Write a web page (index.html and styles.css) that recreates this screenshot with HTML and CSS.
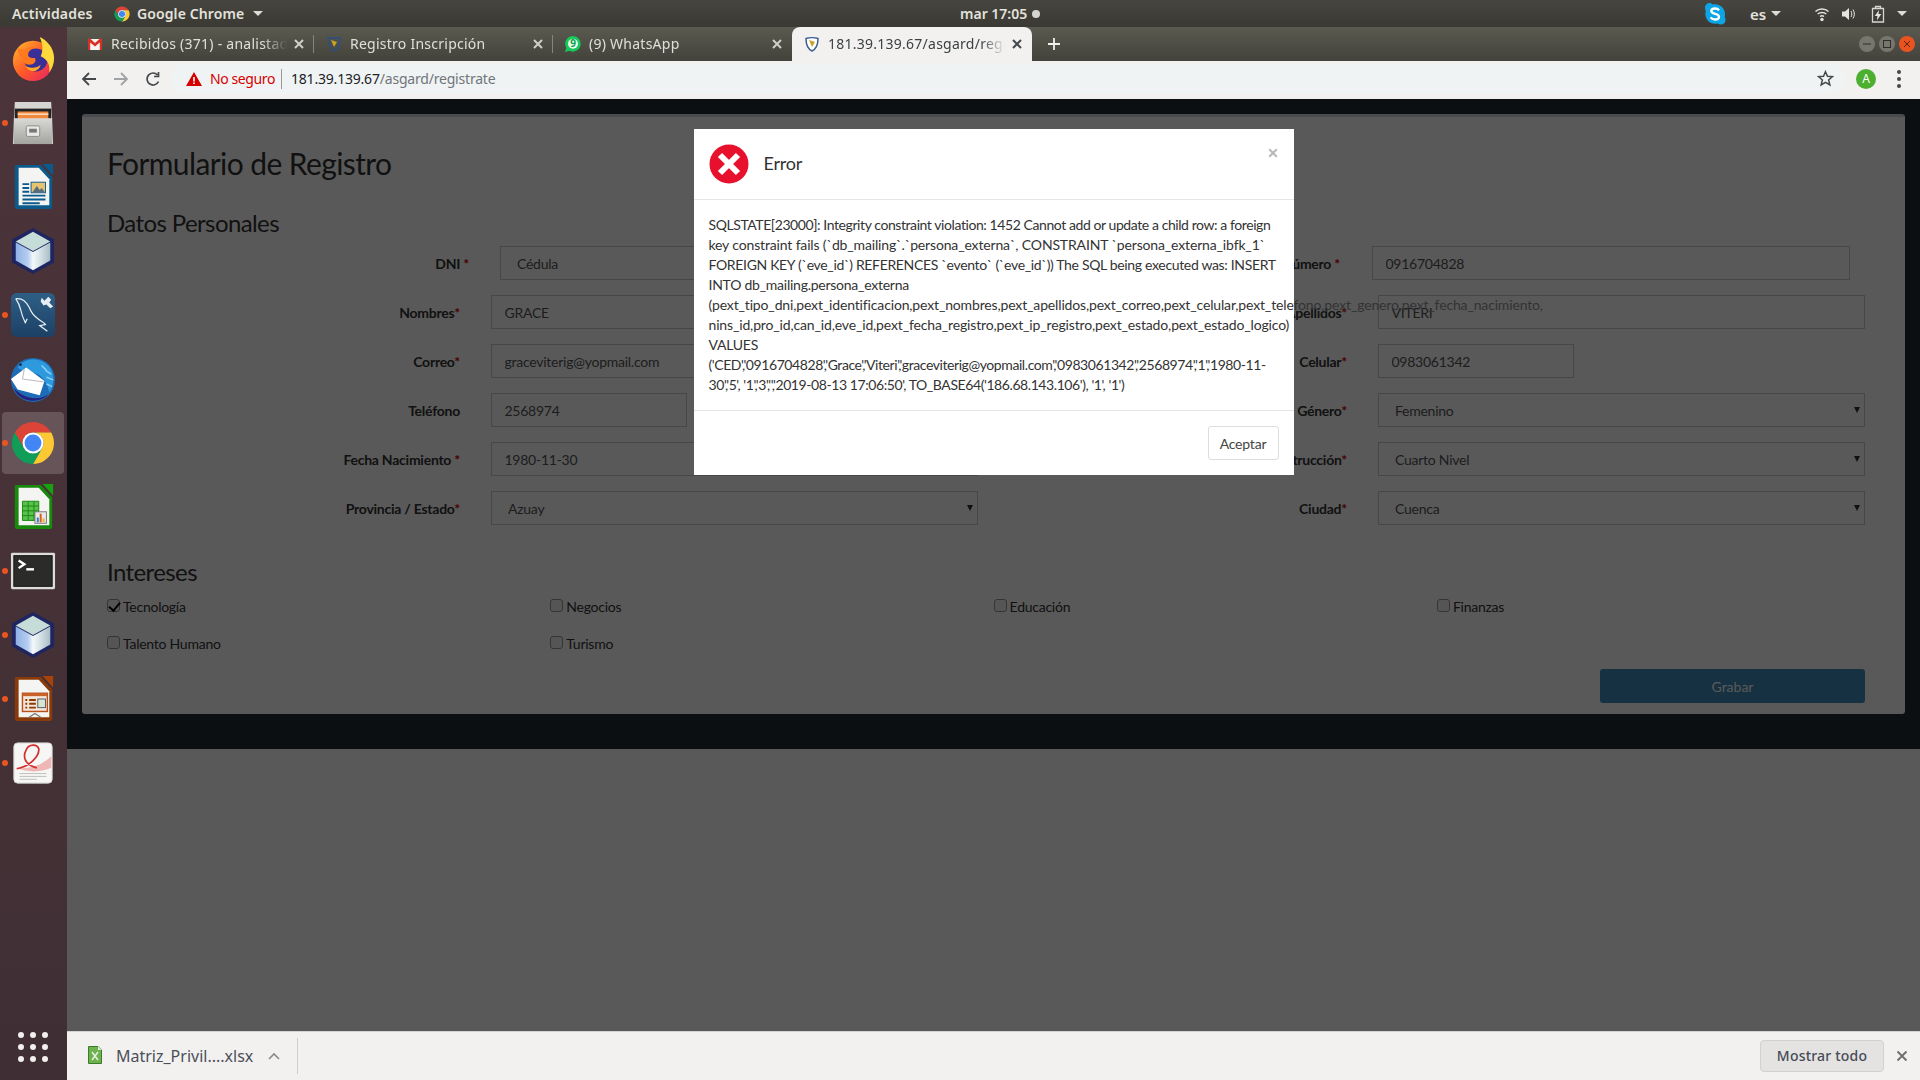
FILE: index.html
```html
<!DOCTYPE html>
<html lang="es">
<head>
<meta charset="utf-8">
<title>Registro</title>
<link rel="stylesheet" href="styles.css">
</head>
<body>
<svg class="defs" width="0" height="0">
  <defs>
    <symbol id="chrome" viewBox="1 1 46 46">
      <path fill="#db4437" d="M5 13A22 22 0 0 1 43 13H24A11 11 0 0 0 14.500 29.500Z"/>
      <path fill="#fcc934" d="M43 13A22 22 0 0 1 24 46L33.500 29.500A11 11 0 0 0 24 13Z"/>
      <path fill="#0f9d58" d="M24 46A22 22 0 0 1 5 13L14.500 29.500A11 11 0 0 0 33.500 29.500Z"/>
      <circle cx="24" cy="24" r="11" fill="#fff"/>
      <circle cx="24" cy="24" r="8.800" fill="#4285f4"/>
    </symbol>
    <linearGradient id="cubeL" x1="0" y1="0" x2="1" y2="0">
      <stop offset="0" stop-color="#8fb0e6"/><stop offset=".7" stop-color="#b5cdf0"/><stop offset="1" stop-color="#f4f8fb"/>
    </linearGradient>
    <linearGradient id="cubeR" x1="0" y1="0" x2="1" y2="0">
      <stop offset="0" stop-color="#f4f8fb"/><stop offset=".5" stop-color="#cfdde2"/><stop offset="1" stop-color="#a9bcc6"/>
    </linearGradient>
    <symbol id="cube" viewBox="1 0 46 48">
      <path fill="#1f2560" d="M24 0 46 12V36L24 48 2 36V12Z"/>
      <path fill="#c5dcd8" d="M24 4 42 14 24 24 6 14Z"/>
      <path fill="url(#cubeL)" d="M6 15 24 25V44L6 34Z"/>
      <path fill="url(#cubeR)" d="M42 15V34L24 44V25Z"/>
    </symbol>
    <symbol id="x" viewBox="0 0 12 12">
      <path d="M2 2 10 10M10 2 2 10" fill="none" stroke="currentColor" stroke-width="2"/>
    </symbol>
    <linearGradient id="ff" x1="0" y1="0" x2="1" y2="1">
      <stop offset="0" stop-color="#ffbd2e"/><stop offset=".5" stop-color="#ff5a26"/><stop offset="1" stop-color="#e5206a"/>
    </linearGradient>
    <linearGradient id="steel" x1="0" y1="0" x2="0" y2="1">
      <stop offset="0" stop-color="#d9d9d6"/><stop offset="1" stop-color="#a3a3a0"/>
    </linearGradient>
    <linearGradient id="wb" x1="0" y1="0" x2="0" y2="1">
      <stop offset="0" stop-color="#2f5f86"/><stop offset="1" stop-color="#1c4066"/>
    </linearGradient>
  </defs>
</svg>

<header class="topbar">
  <span class="top-activities">Actividades</span>
  <svg class="top-chrome" width="16" height="16"><use href="#chrome"/></svg>
  <span class="top-app">Google Chrome</span>
  <i class="caret top-caret"></i>
  <span class="top-clock">mar 17:05</span>
  <i class="top-dot"></i>
  <svg class="top-skype" width="22" height="24" viewBox="0 0 22 24">
    <path fill="#0ea5e6" d="M6 1C3 1 1 3 1 6c0 1 .3 2 .8 2.800C1.500 9.800 1.400 10.900 1.400 12c0 5.500 4.300 9.800 9.600 9.800.9 0 1.800-.1 2.600-.4 1 .7 2.100 1.100 3.400 1.100 2.800 0 4.500-2.200 4.500-4.800 0-1-.3-2-.8-2.800.2-.9.3-1.900.3-2.900C20.800 6.500 16.500 2.200 11 2.200c-.9 0-1.800.1-2.600.3C7.800 1.500 7 1 6 1Z"/>
    <path fill="none" stroke="#fff" stroke-width="2.300" d="M15 8.300C14.200 7 12.800 6.500 11 6.500 8.800 6.500 7.300 7.500 7.300 9.100c0 3.600 7.700 1.800 7.700 5.600 0 1.700-1.700 2.800-4 2.800-2 0-3.500-.8-4.300-2.200"/>
  </svg>
  <span class="top-lang">es</span>
  <i class="caret top-caret2"></i>
  <svg class="top-wifi" width="16" height="16" viewBox="0 0 16 16">
    <path fill="none" stroke="#e6e4df" stroke-width="1.500" d="M1.500 5.500C5 2.300 11 2.300 14.500 5.500M3.700 8C6 6 10 6 12.300 8M6 10.500c1-.8 3-.8 4 0"/>
    <circle cx="8" cy="13.500" r="1.700" fill="#e6e4df"/>
  </svg>
  <svg class="top-vol" width="16" height="16" viewBox="0 0 16 16">
    <path fill="#e6e4df" d="M1 5.500H4L8 2V14L4 10.500H1Z"/>
    <path fill="none" stroke="#e6e4df" d="M10 5c1 2 1 4 0 6M12 3.500c1.800 3 1.800 6 0 9"/>
  </svg>
  <svg class="top-bat" width="14" height="18" viewBox="0 0 14 18">
    <path fill="none" stroke="#d8d6d0" stroke-width="1.300" d="M1.500 3.500H12.500V17H1.500ZM4.500 3.500V1.500H9.500V3.500"/>
    <path fill="#e6e4df" d="M8 5 3.800 11H6.500L5.800 15.500 10.300 9H7.500Z"/>
  </svg>
  <i class="caret top-caret3"></i>
</header>

<div class="desktop">
  <nav class="dock">
    <div class="dock-item">
      <svg class="dock-icon" viewBox="0 0 48 48">
        <circle cx="24" cy="26" r="21" fill="url(#ff)"/>
        <circle cx="27" cy="25" r="12" fill="#3a2f96"/>
        <path fill="#ffd83b" d="M31 1c7 3 15 11 15 22 0 6-2 11-5 15 1-8-2-14-9-17 3-6 2-13-1-20Z"/>
        <path fill="#ff7a1f" d="M8 13c3 0 6 2 8 1 3-2 6-3 9-2-3 2-6 4-6 7-1 3 3 4 7 4 2 4-1 7-6 7-4 0-7-3-8-7-2-3-4-6-4-10Z"/>
        <path fill="#ffab25" d="M16 31c5 3 12 3 16-1-1 5-6 8-11 6-2-1-4-3-5-5Z"/>
      </svg>
    </div>
    <div class="dock-item running">
      <svg class="dock-icon" viewBox="0 0 48 48">
        <path fill="#d5d5d2" d="M5 2H43L45 46H3Z"/>
        <rect x="5" y="9" width="38" height="13" fill="#222"/>
        <rect x="8" y="12" width="32" height="8" fill="#f0883e"/>
        <rect x="8" y="14" width="32" height="1.500" fill="#f6e6d0"/>
        <rect x="4" y="19" width="40" height="27" fill="url(#steel)"/>
        <rect x="17" y="27" width="14" height="11" rx="1.500" fill="#e8e8e6" stroke="#8a8a88"/>
        <rect x="20" y="30" width="8" height="4" fill="#777"/>
      </svg>
    </div>
    <div class="dock-item">
      <svg class="dock-icon" viewBox="0 0 48 48">
        <path fill="#0b5a8c" d="M6 1H32L44 14V44A3 3 0 0 1 41 47H8A3 3 0 0 1 5 44V2Z"/>
        <path fill="#f4f4f2" d="M9 4H30L41 16V43H9Z"/>
        <path fill="#0b5a8c" d="M34 0H45V12Z"/>
        <path fill="#0b5a8c" d="M13 20H20V22H13ZM13 24H20V26H13ZM13 28H20V30H13ZM13 32H37V34H13ZM13 36H37V38H13ZM13 40H31V42H13Z"/>
        <rect x="22" y="19" width="15" height="11" fill="#e7c36f" stroke="#0b5a8c"/>
        <path fill="#566d7d" d="M23 30 28 23 31 27 33 25 37 30Z"/>
      </svg>
    </div>
    <div class="dock-item">
      <svg class="dock-icon" viewBox="0 0 48 48"><use href="#cube"/></svg>
    </div>
    <div class="dock-item running">
      <svg class="dock-icon" viewBox="0 0 48 48">
        <rect x="1" y="1" width="46" height="46" rx="6" fill="url(#wb)"/>
        <path fill="none" stroke="#e6edf2" stroke-width="1.300" d="M6 7c6-1 11 3 14 9 2 5 5 9 8 11 3 3 7 4 9 7l-6 1 8 6M6 7c2 3 4 7 5 11 1 5 3 10 5 14l2-4"/>
        <path fill="#e6edf2" d="M33 6 36 9 40 5 43 8 41 11 45 15 42 17 38 13 35 14 32 10Z"/>
      </svg>
    </div>
    <div class="dock-item">
      <svg class="dock-icon" viewBox="0 0 48 48">
        <circle cx="24" cy="25" r="23" fill="#1d6cb5"/>
        <path fill="#2d9ade" d="M8 12C14 2 30 0 40 10c7 8 7 20 1 28-2-10-7-18-15-20-6-2-13-1-18-6Z"/>
        <path fill="none" stroke="#8fd0f5" stroke-width="1.500" d="M33 10 38 15M37 15 43 19M38 22 45 25M38 29 44 32"/>
        <path fill="#27207d" d="M4 33c6 7 14 11 23 11 5 0 9-1 13-4-6 8-22 9-30 2-2-2-5-5-6-9Z"/>
        <path fill="#fff" d="M1 24 17 12 36 26 31 41 8 35Z"/>
        <path fill="none" stroke="#b7b7c2" d="M15 13 13 24 35 27"/>
        <circle cx="11" cy="9" r="1.300" fill="#111a44"/>
      </svg>
    </div>
    <div class="dock-item running active">
      <svg class="dock-icon" viewBox="0 0 46 46"><use href="#chrome"/></svg>
    </div>
    <div class="dock-item">
      <svg class="dock-icon" viewBox="0 0 48 48">
        <path fill="#178a0e" d="M6 1H32L44 14V44A3 3 0 0 1 41 47H8A3 3 0 0 1 5 44V2Z"/>
        <path fill="#f4f4f2" d="M9 4H30L41 16V43H9Z"/>
        <path fill="#18a00f" d="M34 0H45V12Z"/>
        <path fill="#5cc04e" stroke="#178a0e" d="M13 18H30V38H13Z"/>
        <path fill="none" stroke="#178a0e" d="M13 23H30M13 28H30M13 33H30M19 18V38M25 18V38"/>
        <rect x="26" y="29" width="12" height="12" fill="#e8e8e8" stroke="#777"/>
        <path fill="#2d7fd0" d="M28 35H30V40H28Z"/><path fill="#dd5a1c" d="M31 31H33V40H31Z"/><path fill="#ecb21f" d="M34 36H36V40H34Z"/>
      </svg>
    </div>
    <div class="dock-item running">
      <svg class="dock-icon" viewBox="0 0 48 48">
        <rect x="1" y="5" width="46" height="38" rx="1.500" fill="#dcdcd9"/>
        <rect x="4" y="8" width="40" height="32" fill="#2b2b2a" stroke="#111"/>
        <path fill="none" stroke="#fff" stroke-width="2.500" d="M9 13 15 17 9 21"/>
        <rect x="17" y="21" width="8" height="2.500" fill="#fff"/>
      </svg>
    </div>
    <div class="dock-item running">
      <svg class="dock-icon" viewBox="0 0 48 48"><use href="#cube"/></svg>
    </div>
    <div class="dock-item running">
      <svg class="dock-icon" viewBox="0 0 48 48">
        <path fill="#8a3a08" d="M6 1H32L44 14V44A3 3 0 0 1 41 47H8A3 3 0 0 1 5 44V2Z"/>
        <path fill="#f4f4f2" d="M9 4H30L41 16V43H9Z"/>
        <path fill="#a8420b" d="M34 0H45V12Z"/>
        <rect x="13" y="18" width="26" height="19" fill="#f3e6d8" stroke="#b8501c" stroke-width="1.500"/>
        <rect x="13" y="18" width="26" height="3" fill="#c8612a"/>
        <path fill="#8a3a08" d="M16 24H18V26H16ZM20 24H27V26H20ZM16 28H18V30H16ZM20 28H27V30H20ZM16 32H18V34H16ZM20 32H27V34H20Z"/>
        <rect x="29" y="24" width="8" height="9" fill="#d7e6cf" stroke="#557"/>
        <path fill="none" stroke="#777" stroke-width="1.300" d="M20 43 26 39 32 43"/>
      </svg>
    </div>
    <div class="dock-item running">
      <svg class="dock-icon" viewBox="0 0 48 48">
        <rect x="4" y="3" width="40" height="42" rx="4" fill="#f6f6f4" stroke="#cfcfcd"/>
        <path fill="#efb6b6" d="M6 29C20 31 34 26 43 17V29C32 34 18 34 6 29Z"/>
        <path fill="none" stroke="#d32f2f" stroke-width="1.800" d="M7 30C20 28 31 17 30 9 28 4 20 4 17 10 13 17 15 26 28 29"/>
        <path fill="none" stroke="#bdbdbb" d="M10 35H38M10 38H38M10 41H28"/>
      </svg>
    </div>
    <div class="dock-spacer"></div>
    <div class="apps-grid">
      <i></i><i></i><i></i><i></i><i></i><i></i><i></i><i></i><i></i>
    </div>
  </nav>

  <div class="window">
    <div class="tabstrip">
      <div class="tab sep">
        <svg class="favicon" viewBox="0 0 16 16"><rect x="1" y="3" width="14" height="11" fill="#f4f4f2"/><path fill="#d93025" d="M1 2.500H3L8 7 13 2.500H15V14H12.800V6.500L8 10.500 3.200 6.500V14H1Z"/></svg>
        <span class="tab-title">Recibidos (371) - analistad</span>
        <svg class="tab-x"><use href="#x"/></svg>
      </div>
      <div class="tab sep">
        <svg class="favicon" viewBox="0 0 16 16"><path fill="none" stroke="#2b4f86" stroke-width="1.500" d="M2 2H14C14 9 12 13 8 15 5 13 3 9 2 2Z"/><path fill="#c9a227" d="M5 4 11 6 8 11Z"/></svg>
        <span class="tab-title">Registro Inscripción</span>
        <svg class="tab-x"><use href="#x"/></svg>
      </div>
      <div class="tab">
        <svg class="favicon" viewBox="0 0 16 16"><path fill="#14c95a" d="M8 0A7.800 7.800 0 0 0 1.300 11.800L0 16 4.400 14.800A7.800 7.800 0 1 0 8 0Z"/><circle cx="8" cy="7.800" r="5" fill="#eafaf0"/><text class="wa-num" x="8" y="11.300" text-anchor="middle">9</text></svg>
        <span class="tab-title">(9) WhatsApp</span>
        <svg class="tab-x"><use href="#x"/></svg>
      </div>
      <div class="tab active">
        <svg class="favicon" viewBox="0 0 16 16"><path fill="#fff" stroke="#3a5e92" stroke-width="1.500" d="M2 2.500C5 1.500 11 1.500 14 2.500 14 9 12 13 8 15 4 13 2 9 2 2.500Z"/><path fill="#c9a227" d="M5 4 11 6 8 11Z"/></svg>
        <span class="tab-title">181.39.139.67/asgard/registrate</span>
        <svg class="tab-x"><use href="#x"/></svg>
      </div>
      <svg class="new-tab" width="14" height="14" viewBox="0 0 14 14"><path d="M7 1V13M1 7H13" stroke="#f0efec" stroke-width="1.800"/></svg>
      <div class="win-controls">
        <span class="win-btn"><svg width="16" height="16" viewBox="0 0 16 16"><path d="M4 8H12" stroke="#2f2e2a" stroke-width="1"/></svg></span>
        <span class="win-btn"><svg width="16" height="16" viewBox="0 0 16 16"><rect x="4.500" y="4.500" width="7" height="7" fill="none" stroke="#2f2e2a"/></svg></span>
        <span class="win-btn close"><svg width="16" height="16" viewBox="0 0 16 16"><path d="M5 5 11 11M11 5 5 11" stroke="#5c2410" stroke-width="1"/></svg></span>
      </div>
    </div>

    <div class="toolbar">
      <svg class="tb-icon" width="16" height="16" viewBox="0 0 16 16"><path d="M15 8H2M8 2 2 8 8 14" fill="none" stroke="#45484b" stroke-width="1.800"/></svg>
      <svg class="tb-icon" width="16" height="16" viewBox="0 0 16 16"><path d="M1 8H14M8 2 14 8 8 14" fill="none" stroke="#a0a2a4" stroke-width="1.800"/></svg>
      <svg class="tb-icon" width="16" height="16" viewBox="0 0 16 16"><path d="M13.500 10.500A6 6 0 1 1 12.500 4M13.500 1V5.500H9" fill="none" stroke="#45484b" stroke-width="1.700"/></svg>
      <div class="omnibox">
        <svg class="warn" width="16" height="14" viewBox="0 0 16 14"><path fill="#d50000" d="M8 0 16 14H0Z"/><path fill="#fff" d="M7.200 5H8.800V9.500H7.200ZM7.200 10.500H8.800V12H7.200Z"/></svg>
        <span class="insecure">No seguro</span>
        <span class="omni-sep"></span>
        <span class="url"><b>181.39.139.67</b>/asgard/registrate</span>
        <svg class="star" width="17" height="17" viewBox="0 0 18 18"><path fill="none" stroke="#45484b" stroke-width="1.600" d="M9 1.800 11.100 6.700 16.300 7.100 12.300 10.500 13.600 15.700 9 13 4.400 15.700 5.700 10.500 1.700 7.100 6.900 6.700Z"/></svg>
      </div>
      <span class="avatar">A</span>
      <span class="kebab"><i></i><i></i><i></i></span>
    </div>

    <div class="viewport">
      <div class="page">
        <section class="card">
          <h1 class="form-title">Formulario de Registro</h1>
          <h2 class="section-title">Datos Personales</h2>
          <div class="form-rows">
            <div class="form-row">
              <div class="field dni">
                <label class="field-label">DNI <em>*</em></label>
                <div class="select-wrap grow"><select class="control sel"><option>Cédula</option></select></div>
              </div>
              <div class="field numero">
                <label class="field-label">Número <em>*</em></label>
                <input class="control grow" value="0916704828">
              </div>
            </div>
            <div class="form-row">
              <div class="field">
                <label class="field-label">Nombres<em>*</em></label>
                <input class="control grow" value="GRACE">
              </div>
              <div class="field right">
                <label class="field-label">Apellidos<em>*</em></label>
                <input class="control grow" value="VITERI">
              </div>
            </div>
            <div class="form-row">
              <div class="field">
                <label class="field-label">Correo<em>*</em></label>
                <input class="control grow" value="graceviterig@yopmail.com">
              </div>
              <div class="field right">
                <label class="field-label">Celular<em>*</em></label>
                <input class="control short" value="0983061342">
              </div>
            </div>
            <div class="form-row">
              <div class="field">
                <label class="field-label">Teléfono</label>
                <input class="control short" value="2568974">
              </div>
              <div class="field right">
                <label class="field-label">Género<em>*</em></label>
                <div class="select-wrap grow"><select class="control sel"><option>Femenino</option></select></div>
              </div>
            </div>
            <div class="form-row">
              <div class="field">
                <label class="field-label">Fecha Nacimiento <em>*</em></label>
                <input class="control grow" value="1980-11-30">
              </div>
              <div class="field right">
                <label class="field-label">Instrucción<em>*</em></label>
                <div class="select-wrap grow"><select class="control sel"><option>Cuarto Nivel</option></select></div>
              </div>
            </div>
            <div class="form-row">
              <div class="field">
                <label class="field-label">Provincia / Estado<em>*</em></label>
                <div class="select-wrap grow"><select class="control sel"><option>Azuay</option></select></div>
              </div>
              <div class="field right">
                <label class="field-label">Ciudad<em>*</em></label>
                <div class="select-wrap grow"><select class="control sel"><option>Cuenca</option></select></div>
              </div>
            </div>
          </div>
          <h2 class="section-title interests">Intereses</h2>
          <div class="checks">
            <label class="check"><input type="checkbox" checked><span>Tecnología</span></label>
            <label class="check"><input type="checkbox"><span>Negocios</span></label>
            <label class="check"><input type="checkbox"><span>Educación</span></label>
            <label class="check"><input type="checkbox"><span>Finanzas</span></label>
            <label class="check"><input type="checkbox"><span>Talento Humano</span></label>
            <label class="check"><input type="checkbox"><span>Turismo</span></label>
          </div>
          <div class="actions"><button class="btn-primary">Grabar</button></div>
        </section>
      </div>

      <div class="backdrop"></div>

      <div class="modal-layer">
        <div class="modal">
          <div class="modal-header">
            <svg class="err-icon" width="40" height="40" viewBox="0 0 40 40">
              <circle cx="20" cy="20" r="19.500" fill="#e8112d"/>
              <path d="M11 11 29 29M29 11 11 29" stroke="#fff" stroke-width="6"/>
            </svg>
            <span class="modal-title">Error</span>
            <svg class="modal-close" width="10" height="10" viewBox="0 0 12 12"><path d="M1.500 1.500 10.500 10.500M10.500 1.500 1.500 10.500" stroke="#b8b8b8" stroke-width="2.400"/></svg>
          </div>
          <div class="modal-body">
            <span class="sql-line tight">SQLSTATE[23000]: Integrity constraint violation: 1452 Cannot add or update a child row: a foreign</span>
            <span class="sql-line wide">key constraint fails (`db_mailing`.`persona_externa`, CONSTRAINT `persona_externa_ibfk_1`</span>
            <span class="sql-line mid">FOREIGN KEY (`eve_id`) REFERENCES `evento` (`eve_id`)) The SQL being executed was: INSERT</span>
            <span class="sql-line">INTO db_mailing.persona_externa</span>
            <span class="sql-line wide">(pext_tipo_dni,pext_identificacion,pext_nombres,pext_apellidos,pext_correo,pext_celular,pext_telefono,pext_genero,pext_fecha_nacimiento,</span>
            <span class="sql-line wide">nins_id,pro_id,can_id,eve_id,pext_fecha_registro,pext_ip_registro,pext_estado,pext_estado_logico)</span>
            <span class="sql-line">VALUES</span>
            <span class="sql-line tight">('CED','0916704828','Grace','Viteri','graceviterig@yopmail.com','0983061342','2568974','1','1980-11-</span>
            <span class="sql-line tight">30','5', '1','3','','2019-08-13 17:06:50', TO_BASE64('186.68.143.106'), '1', '1')</span>
          </div>
          <div class="modal-footer"><button class="btn-default">Aceptar</button></div>
        </div>
      </div>
    </div>

    <div class="downloads">
      <svg class="xlsx" width="14" height="18" viewBox="0 0 14 18">
        <path fill="#6db24f" stroke="#3c7a2c" d="M.5 .5H10L13.500 4V17.500H.5Z"/>
        <path fill="#e8f2e0" d="M10 .5V4H13.500Z"/>
        <path d="M4 6 10 14M10 6 4 14" stroke="#e8f2e0" stroke-width="1.500"/>
      </svg>
      <span class="dl-name">Matriz_Privil....xlsx</span>
      <svg class="dl-chev" width="12" height="8" viewBox="0 0 12 8"><path d="M1 7 6 2 11 7" fill="none" stroke="#8a8a88" stroke-width="1.600"/></svg>
      <span class="dl-sep"></span>
      <button class="show-all">Mostrar todo</button>
      <svg class="dl-x" width="12" height="12" viewBox="0 0 12 12"><path d="M1.500 1.500 10.500 10.500M10.500 1.500 1.500 10.500" stroke="#6e6e6c" stroke-width="1.800"/></svg>
    </div>
  </div>
</div>
</body>
</html>
```

FILE: styles.css
```css
* { box-sizing: border-box; }
html, body { margin: 0; height: 100%; }
body {
  width: 1920px;
  height: 1080px;
  overflow: hidden;
  display: flex;
  flex-direction: column;
  font-family: "Lato", "Liberation Sans", sans-serif;
  background: #3c3b37;
}
.defs { position: absolute; }

/* Top bar */
.topbar {
  height: 27px;
  flex: none;
  display: flex;
  align-items: center;
  background: linear-gradient(#46453f, #3a3934);
  color: #e4e2dc;
  font: 600 14px "Noto Sans", sans-serif;
}
.top-activities { margin-left: 12px; width: 83px; letter-spacing: .2px; }
.top-chrome { margin-left: 19px; }
.top-app { margin-left: 7px; width: 112px; white-space: nowrap; letter-spacing: .1px; }
.caret {
  display: block;
  width: 0; height: 0;
  border-left: 5px solid transparent;
  border-right: 5px solid transparent;
  border-top: 5px solid #dedcd6;
}
.top-caret { margin-left: 4px; }
.top-clock { margin-left: 697px; width: 67px; white-space: nowrap; }
.top-dot { display: block; width: 8px; height: 8px; border-radius: 50%; background: #d6d5d0; margin-left: 5px; }
.top-skype { margin-left: 664px; }
.top-lang { margin-left: 24px; width: 21px; font-size: 15px; }
.top-caret2 { margin-left: 0; }
.top-wifi { margin-left: 33px; }
.top-vol { margin-left: 11px; }
.top-bat { margin-left: 14px; }
.top-caret3 { margin-left: 12px; }

.desktop { flex: 1; display: flex; min-height: 0; }

/* Dock */
.dock {
  width: 67px;
  flex: none;
  display: flex;
  flex-direction: column;
  background: linear-gradient(#4c343a, #3f2f34);
}
.dock-item {
  height: 64px;
  flex: none;
  display: flex;
  align-items: center;
  justify-content: center;
  position: relative;
  padding-right: 1px;
}
.dock-icon { width: 46px; height: 46px; }
.dock-item.running::before {
  content: "";
  position: absolute;
  left: 2px;
  top: 29px;
  width: 6px; height: 6px;
  border-radius: 50%;
  background: #e95420;
  z-index: 1;
}
.dock-item.active::after {
  content: "";
  position: absolute;
  left: 2px; right: 3px; top: 1px; bottom: 1px;
  border-radius: 4px;
  background: rgba(255,255,255,.17);
}
.dock-item.active .dock-icon { position: relative; z-index: 1; width: 44px; height: 44px; }
.dock-spacer { flex: 1; }
.apps-grid {
  width: 30px;
  margin: 0 0 18px 18px;
  display: grid;
  grid-template-columns: repeat(3, 6px);
  gap: 6px;
  justify-content: space-between;
}
.apps-grid i { width: 6px; height: 6px; border-radius: 50%; background: #f2f0ee; }

/* Window */
.window { flex: 1; display: flex; flex-direction: column; min-width: 0; }
.tabstrip {
  height: 34px;
  flex: none;
  display: flex;
  align-items: stretch;
  padding-left: 8px;
  background: linear-gradient(#5b5a50, #43423b);
}
.tab {
  width: 239px;
  flex: none;
  display: flex;
  align-items: center;
  padding: 0 9px 0 12px;
  color: #e0ded8;
  position: relative;
}
.tab.sep::after {
  content: "";
  position: absolute;
  right: 0; top: 8px; bottom: 8px;
  width: 1px;
  background: #85837a;
}
.tab.active {
  width: 240px;
  background: #f2f1f0;
  color: #3c4043;
  border-radius: 8px 8px 0 0;
}
.favicon { width: 16px; height: 16px; flex: none; }
.wa-num { font: 700 10px "Noto Sans", sans-serif; fill: #0f9f45; }
.tab-title {
  flex: 1;
  margin-left: 8px;
  min-width: 0;
  overflow: hidden;
  white-space: nowrap;
  padding-bottom: 2px;
  font: 400 14px "Noto Sans", sans-serif;
  letter-spacing: .25px;
  -webkit-mask-image: linear-gradient(to left, transparent 0, #000 24px);
  mask-image: linear-gradient(to left, transparent 0, #000 24px);
}
.tab-x { width: 12px; height: 12px; flex: none; margin-left: 6px; color: #d0cec8; }
.tab.active .tab-x { color: #45484b; }
.new-tab { align-self: center; margin-left: 15px; }
.win-controls { margin-left: auto; display: flex; align-items: center; gap: 4px; padding-right: 5px; }
.win-btn {
  width: 16px; height: 16px;
  border-radius: 50%;
  background: #77766d;
  display: block;
  line-height: 0;
}
.win-btn.close { background: #e9531f; }

/* Toolbar */
.toolbar {
  height: 38px;
  flex: none;
  display: flex;
  align-items: center;
  background: #f2f1f0;
  padding: 0 0 3px 14px;
  gap: 0;
}
.tb-icon { margin-right: 16px; }
.tb-icon:nth-child(3) { margin-right: 12px; }
.omnibox {
  width: 1674px;
  height: 30px;
  display: flex;
  align-items: center;
  background: #f0f3f4;
  border-radius: 15px;
  padding-left: 15px;
  margin-left: -2px;
}
.warn { flex: none; }
.insecure { margin-left: 8px; color: #d50000; font: 400 14px "Noto Sans", sans-serif; letter-spacing: -.4px; width: 64px; white-space: nowrap; }
.omni-sep { width: 1px; height: 20px; background: #9a9a9a; margin: 0 9px 0 7px; }
.url { font: 400 14px "Noto Sans", sans-serif; color: #70757a; white-space: nowrap; letter-spacing: -.2px; }
.url b { font-weight: 400; color: #202124; }
.star { margin-left: auto; margin-right: 11px; }
.avatar {
  width: 20px; height: 20px;
  margin-left: 11px;
  border-radius: 50%;
  background: #4caf2f;
  color: #fff;
  font: 400 12px "Noto Sans", sans-serif;
  display: flex;
  align-items: center;
  justify-content: center;
}
.kebab { margin-left: 21px; display: flex; flex-direction: column; gap: 3px; }
.kebab i { width: 4px; height: 4px; border-radius: 50%; background: #45484b; display: block; }

/* Page */
.viewport { flex: 1; position: relative; overflow: hidden; background: #fff; min-height: 0; }
.page { height: 650px; background: #222d32; padding: 15px; }
.card {
  height: 600px;
  background: #fff;
  border-top: 3px solid #d2d6de;
  border-radius: 3px;
  padding: 0 40px 0 25px;
  color: #333;
  font-size: 14px;
  letter-spacing: -.25px;
}
.form-title { margin: 28px 0 0; font-size: 30px; font-weight: 400; line-height: 36px; letter-spacing: -.6px; }
.section-title { margin: 29px 0 0; font-size: 24px; font-weight: 400; line-height: 26px; letter-spacing: -.6px; }
.form-rows { margin-top: 10px; display: flex; flex-direction: column; gap: 15px; }
.form-row { display: flex; height: 34px; }
.field { display: flex; align-items: center; }
.field:first-child { width: 871px; flex: none; }
.field:last-child { flex: 1; }
.field-label { font-weight: 700; text-align: right; white-space: nowrap; flex: none; width: 353px; margin-right: 31px; }
.field.right .field-label { width: 369px; }
.field:first-child .field-label { width: 353px; }
.field.dni .field-label { width: 362px; }
.field.numero .field-label { width: 362px; margin-right: 32px; }
.field.numero { padding-right: 15px; }
.field-label em { font-style: normal; color: #c00; }
.control {
  height: 34px;
  border: 1px solid #ccc;
  background: #fff;
  color: #555;
  font: 14px "Lato", sans-serif;
  letter-spacing: -.25px;
  padding: 0 12.500px;
  border-radius: 0;
  outline: 0;
}
.grow { flex: 1; min-width: 0; }
.short { width: 196px; flex: none; }
.select-wrap { position: relative; }
.select-wrap::after {
  content: "";
  position: absolute;
  right: 5px;
  top: 14px;
  border-left: 3px solid transparent;
  border-right: 3px solid transparent;
  border-top: 6px solid #333;
}
.sel { width: 100%; appearance: none; -webkit-appearance: none; padding-left: 16px; }
.interests { margin-top: 34px; }
.checks {
  margin-top: 9px;
  display: grid;
  grid-template-columns: repeat(4, 443.300px);
  row-gap: 12px;
  width: 1773px;
}
.check { display: flex; align-items: flex-start; height: 25px; line-height: 25px; font-size: 14px; }
.check input {
  appearance: none;
  -webkit-appearance: none;
  width: 13px;
  height: 13px;
  margin: 5px 3px 0 0;
  flex: none;
  background: #f4f4f4;
  border: 1px solid #999;
  border-radius: 3px;
  position: relative;
}
.check input:checked::after {
  content: "";
  position: absolute;
  left: 3px;
  top: 0;
  width: 5px;
  height: 9px;
  border: solid #000;
  border-width: 0 2px 2px 0;
  transform: rotate(40deg);
}
.check span { margin-top: 3px; line-height: 20px; }
.actions { display: flex; justify-content: flex-end; margin-top: 13px; padding-right: 0; }
.btn-primary {
  width: 265px;
  height: 34px;
  border: 0;
  border-radius: 3px;
  background: #3c8dbc;
  color: #fff;
  font: 14px "Lato", sans-serif;
}
.backdrop { position: absolute; inset: 0; background: rgba(0,0,0,.65); }
.modal-layer { position: absolute; inset: 0; display: flex; justify-content: center; padding-top: 30px; align-items: flex-start; }
.modal {
  width: 600px;
  background: #fff;
  color: #333;
  font-size: 14px;
}
.modal-header {
  height: 71px;
  border-bottom: 1px solid #e5e5e5;
  display: flex;
  align-items: center;
  padding-left: 15px;
  position: relative;
}
.err-icon { flex: none; }
.modal-title { margin-left: 15px; margin-bottom: 2px; font-size: 18px; letter-spacing: -.2px; }
.modal-close { position: absolute; right: 16px; top: 19px; }
.modal-body {
  padding: 15px;
  line-height: 20px;
  white-space: nowrap;
  height: 210px;
}
.sql-line { display: block; letter-spacing: -.25px; }
.sql-line.tight { letter-spacing: -.42px; }
.sql-line.mid { letter-spacing: -.33px; }
.sql-line.wide { letter-spacing: -.15px; }
.modal-footer {
  height: 65px;
  border-top: 1px solid #e5e5e5;
  display: flex;
  align-items: center;
  justify-content: flex-end;
  padding-right: 15px;
}
.btn-default {
  width: 71px;
  height: 34px;
  background: #fff;
  border: 1px solid #ddd;
  border-radius: 3px;
  color: #444;
  font: 14px "Lato", sans-serif;
  letter-spacing: -.2px;
  padding: 0;
}

/* Downloads */
.downloads {
  height: 49px;
  flex: none;
  display: flex;
  align-items: center;
  background: #f2f1f0;
  border-top: 1px solid #d4d3d1;
  padding-left: 21px;
}
.xlsx { flex: none; margin-top: -3px; }
.dl-name { margin-left: 14px; width: 137px; white-space: nowrap; font: 400 16px "Noto Sans", sans-serif; color: #4b4f58; }
.dl-chev { margin-left: 15px; }
.dl-sep { width: 1px; height: 36px; background: #cfcecc; margin-left: 17px; }
.show-all {
  margin-left: auto;
  width: 124px;
  height: 32px;
  padding: 0 0 2px;
  background: #e4e3e2;
  border: 1px solid #d2d1cf;
  border-radius: 4px;
  color: #474b55;
  font: 500 14px "Noto Sans", sans-serif;
  letter-spacing: .2px;
}
.dl-x { margin: 0 12px 0 12px; }
```
